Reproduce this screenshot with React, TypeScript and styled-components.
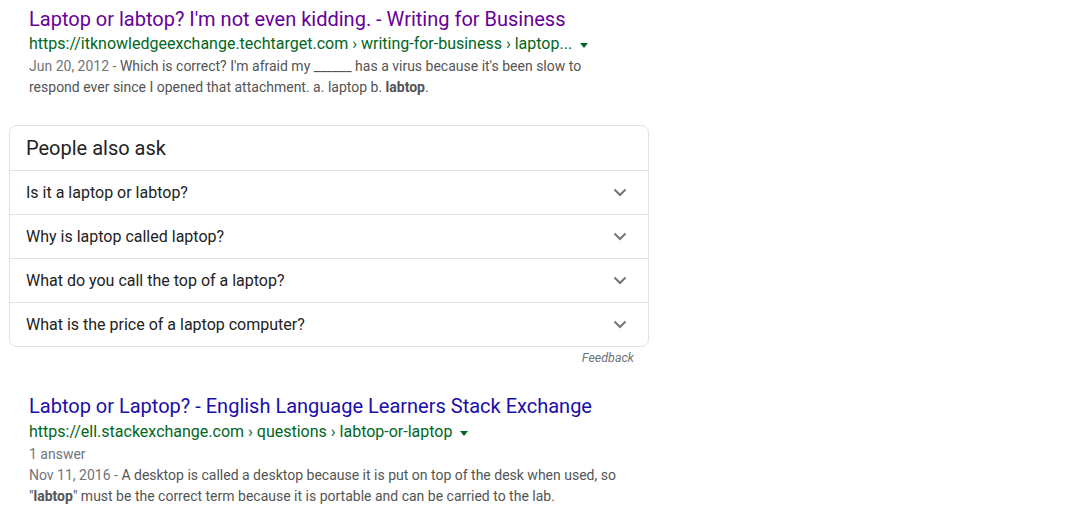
import React from "react";
import styled, { createGlobalStyle } from "styled-components";

const Global = createGlobalStyle`
  html, body { margin: 0; padding: 0; background: #fff; }
  body { font-family: Roboto, Arial, sans-serif; }
`;

const Page = styled.div`
  padding: 6px 0 0 9px;
  width: 640px;
  display: flex;
  flex-direction: column;
`;

const Result = styled.div`
  padding-left: 20px;
  display: flex;
  flex-direction: column;
`;

const Title = styled.a<{ $visited?: boolean }>`
  font-size: 20px;
  line-height: 26px;
  color: ${(p) => (p.$visited ? "#660099" : "#1a0dab")};
  text-decoration: none;
  cursor: pointer;
`;

const Url = styled.div`
  font-size: 16px;
  line-height: 24px;
  color: #006621;
  display: flex;
  align-items: center;
  white-space: nowrap;
`;

const Caret = styled.span`
  margin-left: 8px;
  width: 0;
  height: 0;
  border-left: 4px solid transparent;
  border-right: 4px solid transparent;
  border-top: 5px solid #006621;
  margin-top: 2px;
`;

const Meta = styled.div`
  font-size: 14px;
  line-height: 21px;
  color: #70757a;
`;

const Snippet = styled.div`
  font-size: 14px;
  line-height: 21px;
  color: #545454;
  width: 592px;
  b { color: #545454; font-weight: 700; }
`;

const DateSpan = styled.span`
  color: #70757a;
`;

const AskBox = styled.div`
  margin-top: 27px;
  border: 1px solid #dfe1e5;
  border-radius: 8px;
  width: 638px;
  display: flex;
  flex-direction: column;
`;

const AskHeader = styled.div`
  font-size: 20px;
  line-height: 26px;
  color: #222;
  padding: 9px 16px 9px;
  border-bottom: 1px solid #dfe1e5;
`;

const AskRow = styled.div<{ $last?: boolean }>`
  height: 43px;
  display: flex;
  align-items: center;
  justify-content: space-between;
  padding: 0 21px 0 16px;
  font-size: 16px;
  color: #222;
  border-bottom: ${(p) => (p.$last ? "none" : "1px solid #dfe1e5")};
`;

const Feedback = styled.div`
  width: 640px;
  text-align: right;
  padding-right: 15px;
  box-sizing: border-box;
  font-size: 12.5px;
  font-style: italic;
  color: #70757a;
  line-height: 20px;
  margin-top: 1px;
`;

const Chevron = () => (
  <svg width="14" height="9" viewBox="0 0 14 9">
    <path d="M1.5 1.5 L7 7 L12.5 1.5" fill="none" stroke="#70757a" strokeWidth="2" />
  </svg>
);

const questions = [
  "Is it a laptop or labtop?",
  "Why is laptop called laptop?",
  "What do you call the top of a laptop?",
  "What is the price of a laptop computer?",
];

const Second = styled(Result)`
  margin-top: 25px;
  ${Url} { margin-top: 1px; }
`;

export default function App() {
  return (
    <>
      <Global />
      <Page>
        <Result>
          <Title $visited>Laptop or labtop? I'm not even kidding. - Writing for Business</Title>
          <Url>
            https://itknowledgeexchange.techtarget.com › writing-for-business › laptop...
            <Caret />
          </Url>
          <Snippet>
            <DateSpan>Jun 20, 2012 - </DateSpan>Which is correct? I'm afraid my ______ has a virus because it's been slow to respond ever since I opened that attachment. a. laptop b. <b>labtop</b>.
          </Snippet>
        </Result>
        <AskBox>
          <AskHeader>People also ask</AskHeader>
          {questions.map((q, i) => (
            <AskRow key={q} $last={i === questions.length - 1}>
              <span>{q}</span>
              <Chevron />
            </AskRow>
          ))}
        </AskBox>
        <Feedback>Feedback</Feedback>
        <Second>
          <Title>Labtop or Laptop? - English Language Learners Stack Exchange</Title>
          <Url>
            https://ell.stackexchange.com › questions › labtop-or-laptop
            <Caret />
          </Url>
          <Meta>1 answer</Meta>
          <Snippet>
            <DateSpan>Nov 11, 2016 - </DateSpan>A desktop is called a desktop because it is put on top of the desk when used, so "<b>labtop</b>" must be the correct term because it is portable and can be carried to the lab.
          </Snippet>
        </Second>
      </Page>
    </>
  );
}
